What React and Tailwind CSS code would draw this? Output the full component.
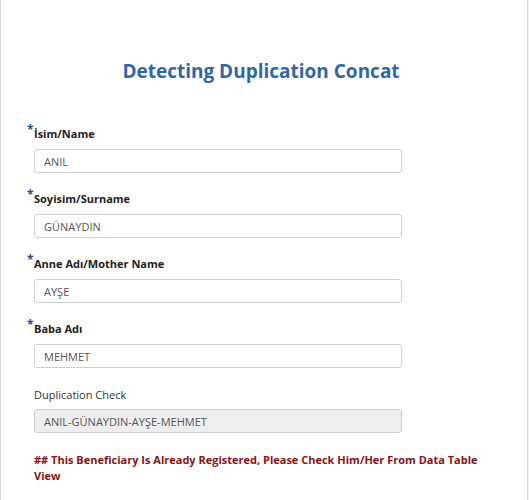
import React from "react";

const fields = [
    { label: "İsim/Name", value: "ANIL" },
    { label: "Soyisim/Surname", value: "GÜNAYDIN" },
    { label: "Anne Adı/Mother Name", value: "AYŞE" },
    { label: "Baba Adı", value: "MEHMET" },
];

export default function App() {
    return (
        <main className="min-h-screen bg-[#f2f2f2] font-['Open_Sans',sans-serif]">
            <div className="w-[528px] min-h-[500px] bg-white border-l border-r border-[#d6d6d6]">
                <h1 className="pt-[57px] pr-[6px] text-center text-[19px] leading-[28px] font-bold text-[#3068a6]">
                    Detecting Duplication Concat
                </h1>

                <form className="pl-[33px] pt-[40px]" onSubmit={(e) => e.preventDefault()}>
                    {fields.map((field) => (
                        <div key={field.label} className="mb-[17px]">
                            <label className="relative block text-[11px] leading-[18px] font-bold text-[#222]">
                                <span className="absolute -left-[7px] -top-[4px] text-[12px] font-bold text-[#1f4f82]">*</span>
                                {field.label}
                            </label>
                            <input
                                readOnly
                                value={field.value}
                                className="mt-[6px] block w-[368px] h-[24px] px-[9px] border border-[#cfcfcf] rounded-[3px] bg-white text-[11px] text-[#555] outline-none"
                            />
                        </div>
                    ))}

                    <div className="pt-[1px]">
                        <label className="block text-[11px] leading-[18px] text-[#333]">Duplication Check</label>
                        <input
                            readOnly
                            value="ANIL-GÜNAYDIN-AYŞE-MEHMET"
                            className="mt-[5px] block w-[368px] h-[24px] px-[9px] border border-[#cfcfcf] rounded-[3px] bg-[#eeeeee] text-[11px] text-[#555] outline-none"
                        />
                    </div>

                    <p className="mt-[19px] w-[460px] text-[11px] leading-[16px] font-bold text-[#8b1212]">
                        ## This Beneficiary Is Already Registered, Please Check Him/Her From Data Table View
                    </p>
                </form>
            </div>
        </main>
    );
}
